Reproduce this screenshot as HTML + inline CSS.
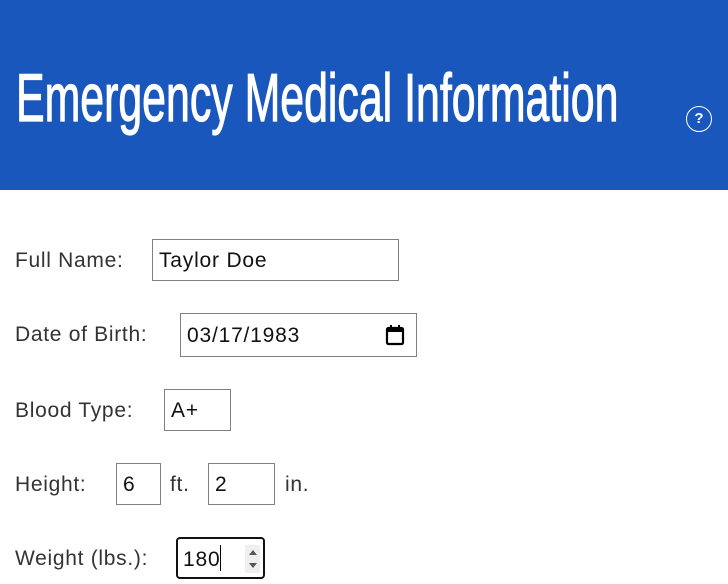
<!DOCTYPE html>
<html><head><style>
body{margin:0;width:728px;height:584px;overflow:hidden;background:#fff;font-family:"Liberation Sans",sans-serif;position:relative}
.hdr{position:absolute;left:0;top:0;width:728px;height:190px;background:#1a57bc}
.title{position:absolute;left:16px;top:62px;font-size:68px;color:#fff;white-space:nowrap;transform:scaleX(0.63);transform-origin:0 0;line-height:72px;-webkit-text-stroke:1.2px #fff}
.help{position:absolute;left:686px;top:106px;width:26px;height:26px;border:1.5px solid #fff;border-radius:50%;box-sizing:border-box;color:#fff;font-size:15px;font-weight:bold;text-align:center;line-height:23px}
.l{position:absolute;font-size:21px;color:#333;line-height:24px;letter-spacing:0.7px}
.b{position:absolute;border:1px solid #808080;box-sizing:border-box;font-size:21px;color:#111;line-height:24px;padding-left:6px;letter-spacing:0.8px}
</style></head><body>
<div class="hdr"><div class="title">Emergency Medical Information</div><div class="help">?</div></div>
<div class="l" style="left:15px;top:249px">Full Name:</div>
<div class="b" style="left:152px;top:239px;width:247px;height:42px;padding-top:9px">Taylor Doe</div>
<div class="l" style="left:15px;top:323px">Date of Birth:</div>
<div class="b" style="left:180px;top:313px;width:237px;height:44px;padding-top:10px">03/17/1983
<svg style="position:absolute;left:204px;top:10px" width="20" height="22" viewBox="0 0 20 22"><rect x="2" y="4" width="16" height="16" rx="1.5" fill="none" stroke="#000" stroke-width="2.2"/><rect x="2" y="4" width="16" height="4" fill="#000"/><rect x="5" y="1" width="2" height="4" fill="#000"/><rect x="13" y="1" width="2" height="4" fill="#000"/></svg></div>
<div class="l" style="left:15px;top:399px">Blood Type:</div>
<div class="b" style="left:164px;top:389px;width:67px;height:42px;padding-top:9px">A+</div>
<div class="l" style="left:15px;top:473px">Height:</div>
<div class="b" style="left:116px;top:463px;width:45px;height:42px;padding-top:9px">6</div>
<div class="l" style="left:170px;top:473px">ft.</div>
<div class="b" style="left:208px;top:463px;width:67px;height:42px;padding-top:9px">2</div>
<div class="l" style="left:285px;top:473px">in.</div>
<div class="l" style="left:15px;top:547px">Weight (lbs.):</div>
<div class="b" style="left:176px;top:537px;width:89px;height:42px;padding-top:6px;border:2px solid #111;border-radius:4px;padding-left:5px">180<span style="display:inline-block;width:1px;height:26px;background:#000;vertical-align:-5px"></span>
<div style="position:absolute;left:67px;top:6px;width:15px;height:28px;background:#efefef"><div style="margin:5px auto 0;width:0;height:0;border-left:4px solid transparent;border-right:4px solid transparent;border-bottom:5px solid #555"></div><div style="margin:8px auto 0;width:0;height:0;border-left:4px solid transparent;border-right:4px solid transparent;border-top:5px solid #555"></div></div></div>
</body></html>
